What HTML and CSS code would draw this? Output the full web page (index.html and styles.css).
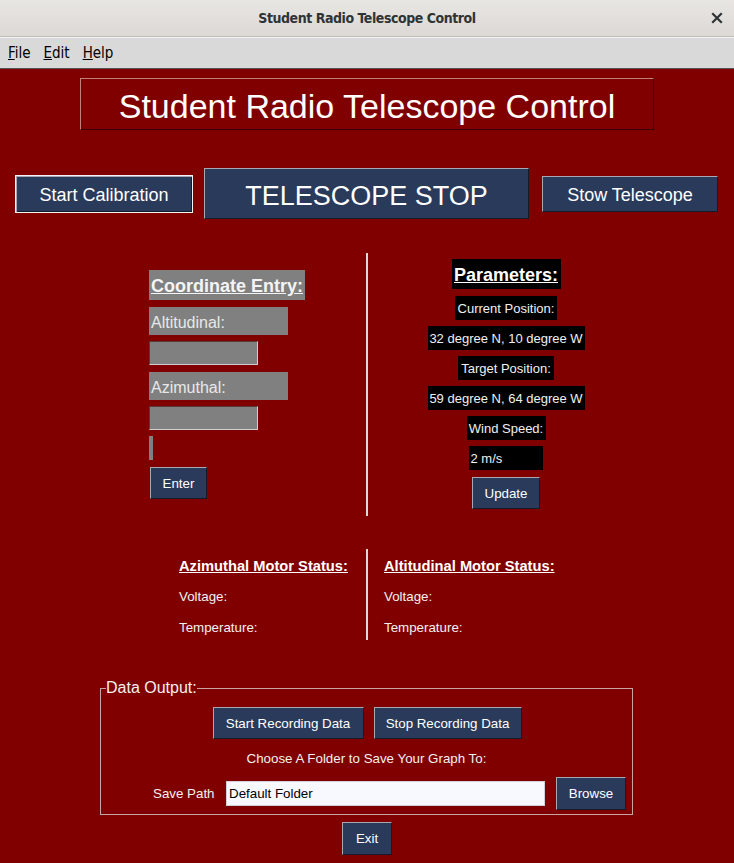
FILE: index.html
```html
<!DOCTYPE html>
<html>
<head>
<meta charset="utf-8">
<title>Student Radio Telescope Control</title>
<link rel="stylesheet" href="styles.css">
</head>
<body>
<div class="window">
  <div class="titlebar">
    <span class="title">Student Radio Telescope Control</span>
    <svg class="close" width="12" height="12" viewBox="0 0 12 12"><path d="M2 2 L10 10 M10 2 L2 10" stroke="#2e3436" stroke-width="2.2" stroke-linecap="square"/></svg>
  </div>
  <div class="menubar">
    <span class="menu"><u>F</u>ile</span>
    <span class="menu"><u>E</u>dit</span>
    <span class="menu"><u>H</u>elp</span>
  </div>
  <div class="app">
    <div class="header">Student Radio Telescope Control</div>

    <div class="toprow">
      <button class="btn btn-cal">Start Calibration</button>
      <button class="btn btn-stop">TELESCOPE STOP</button>
      <button class="btn btn-stow">Stow Telescope</button>
    </div>

    <div class="middle">
      <div class="coord">
        <div class="coord-title">Coordinate Entry:</div>
        <div class="coord-label">Altitudinal:</div>
        <div class="coord-entry"></div>
        <div class="coord-label">Azimuthal:</div>
        <div class="coord-entry"></div>
        <div class="coord-stub"></div>
        <button class="btn btn-small btn-enter">Enter</button>
      </div>
      <div class="divider"></div>
      <div class="params">
        <div class="param-title">Parameters:</div>
        <div class="param p-cur">Current Position:</div>
        <div class="param p-val">32 degree N, 10 degree W</div>
        <div class="param p-tgt">Target Position:</div>
        <div class="param p-val">59 degree N, 64 degree W</div>
        <div class="param p-wind">Wind Speed:</div>
        <div class="param p-speed">2 m/s</div>
        <button class="btn btn-small btn-update">Update</button>
      </div>
    </div>

    <div class="motors">
      <div class="motor motor-left">
        <div class="motor-title">Azimuthal Motor Status:</div>
        <div class="motor-row">Voltage:</div>
        <div class="motor-row">Temperature:</div>
      </div>
      <div class="divider divider-motor"></div>
      <div class="motor motor-right">
        <div class="motor-title">Altitudinal Motor Status:</div>
        <div class="motor-row">Voltage:</div>
        <div class="motor-row">Temperature:</div>
      </div>
    </div>

    <fieldset class="output">
      <legend>Data Output:</legend>
      <div class="rec-row">
        <button class="btn btn-small btn-rec">Start Recording Data</button>
        <button class="btn btn-small btn-rec">Stop Recording Data</button>
      </div>
      <div class="choose">Choose A Folder to Save Your Graph To:</div>
      <div class="path-row">
        <span class="path-label">Save Path</span>
        <div class="path-entry">Default Folder</div>
        <button class="btn btn-small btn-browse">Browse</button>
      </div>
    </fieldset>

    <div class="exit-row">
      <button class="btn btn-small btn-exit">Exit</button>
    </div>
  </div>
</div>
</body>
</html>
```

FILE: styles.css
```css
* { box-sizing: border-box; }
html, body { margin: 0; padding: 0; }
body {
  width: 734px;
  height: 863px;
  overflow: hidden;
  font-family: "Liberation Sans", Arial, sans-serif;
  background: #800000;
}
.window { width: 734px; height: 863px; display: flex; flex-direction: column; }

.titlebar {
  height: 37px;
  background: linear-gradient(#e8e6e3, #dcd9d5);
  border-bottom: 1px solid #c0bcb7;
  display: flex;
  align-items: center;
  justify-content: center;
  position: relative;
}
.title {
  font-family: "DejaVu Sans Condensed", "DejaVu Sans", sans-serif;
  font-weight: bold;
  font-size: 14px;
  letter-spacing: -0.45px;
  color: #2e3436;
}
.close {
  position: absolute;
  right: 11px;
  top: 12px;
}

.menubar {
  height: 32px;
  background: #d9d9d9;
  border-top: 1px solid #f4f4f4;
  border-bottom: 1px solid #555;
  display: flex;
  align-items: center;
  padding-left: 8px;
  gap: 13px;
}
.menu {
  font-family: "DejaVu Sans Condensed", "DejaVu Sans", sans-serif;
  font-size: 15px;
  color: #000;
}

.app { flex: 1; background: #800000; color: #fff; display: flex; flex-direction: column; }

.header {
  margin: 9px 0 0 80px;
  width: 574px;
  height: 52px;
  border: 1px solid;
  border-color: #c08080 #3a0000 #3a0000 #c08080;
  display: flex;
  align-items: center;
  justify-content: center;
  padding-top: 5px;
  font-size: 34px;
  color: #fff;
}

.btn {
  font-family: "Liberation Sans", Arial, sans-serif;
  background: #293a5b;
  color: #fff;
  border: 1px solid;
  border-color: #a8a8b0 #141c2c #141c2c #a8a8b0;
  padding: 0;
  white-space: nowrap;
  cursor: pointer;
}

.toprow {
  display: flex;
  align-items: center;
  margin-top: 38px;
  padding-left: 15px;
  height: 51px;
}
.btn-cal {
  width: 178px;
  height: 38px;
  font-size: 18px;
  padding-top: 3px;
  border: 1px solid #f4f4f4;
  box-shadow: inset 1px 1px #a8a8b0, inset -1px -1px #141c2c;
}
.btn-stop {
  margin-left: 11px;
  width: 325px;
  height: 51px;
  font-size: 27px;
  padding-top: 5px;
}
.btn-stow {
  margin-left: 13px;
  width: 176px;
  height: 36px;
  font-size: 18px;
  padding-top: 3px;
}

.middle {
  display: flex;
  margin-top: 34px;
  height: 263px;
}
.coord {
  width: 366px;
  padding: 17px 0 0 149px;
  display: flex;
  flex-direction: column;
  align-items: flex-start;
}
.coord-title {
  background: #808080;
  height: 30px;
  padding: 3px 2px 0;
  font-size: 18px;
  font-weight: bold;
  text-decoration: underline;
  display: flex;
  align-items: center;
  color: #f4f4f4;
}
.coord-label {
  margin-top: 7px;
  width: 139px;
  height: 28px;
  background: #808080;
  font-size: 16px;
  color: #e8e8e8;
  padding: 3px 0 0 2px;
  display: flex;
  align-items: center;
}
.coord-entry {
  margin-top: 6px;
  width: 109px;
  height: 24px;
  background: #808080;
  border: 1px solid;
  border-color: #5a3a3a #d0d0d0 #d0d0d0 #5a3a3a;
}
.coord-stub {
  margin-top: 6px;
  width: 4px;
  height: 24px;
  background: #808080;
}
.btn-small { font-size: 13.33px; }
.btn-enter {
  margin-top: 7px;
  margin-left: 1px;
  width: 57px;
  height: 32px;
}

.divider {
  width: 2px;
  background: #d8d8e0;
}

.params {
  width: 276px;
  padding-top: 6px;
  display: flex;
  flex-direction: column;
  align-items: center;
}
.param-title {
  background: #000;
  height: 30px;
  width: 109px;
  padding-top: 3px;
  font-size: 18px;
  font-weight: bold;
  text-decoration: underline;
  display: flex;
  align-items: center;
  justify-content: center;
}
.param {
  background: #000;
  height: 24px;
  margin-top: 6px;
  padding-top: 1px;
  font-size: 13px;
  white-space: nowrap;
  color: #f0f0f0;
  display: flex;
  align-items: center;
  justify-content: center;
}
.p-cur { margin-top: 7px; width: 102px; }
.p-val { width: 157px; }
.p-tgt { width: 96px; }
.p-wind { width: 79px; }
.p-speed { width: 74px; justify-content: flex-start; padding-left: 2px; margin-right: 1px; }
.btn-update {
  margin-top: 7px;
  width: 68px;
  height: 32px;
}

.motors {
  display: flex;
  margin-top: 33px;
  height: 91px;
}
.motor {
  display: flex;
  flex-direction: column;
  font-size: 13.33px;
  color: #f0f0f0;
}
.motor-left { width: 366px; padding-left: 179px; }
.motor-right { padding-left: 16px; }
.motor-title {
  margin-top: 9px;
  font-weight: bold;
  font-size: 14.7px;
  text-decoration: underline;
  color: #fff;
  height: 16px;
  line-height: 16px;
}
.motor-row {
  margin-top: 15px;
  height: 16px;
  line-height: 16px;
}

.output {
  margin: 40px 0 0 100px;
  width: 533px;
  height: 135px;
  padding: 0;
  border: 1px solid #c8a4a4;
  display: flex;
  flex-direction: column;
  align-items: center;
}
.output legend {
  padding: 0;
  margin-left: 5px;
  font-size: 16px;
  color: #f0f0f0;
  line-height: 16px;
}
.rec-row {
  display: flex;
  gap: 10px;
  margin-top: 11px;
  margin-left: 1px;
}
.btn-rec { height: 32px; padding: 0 10px; }
.btn-rec:first-child { width: 151px; }
.btn-rec:last-child { width: 148px; }
.choose {
  margin-top: 12px;
  font-size: 13.33px;
  color: #f0f0f0;
  height: 16px;
  line-height: 16px;
}
.path-row {
  display: flex;
  align-items: center;
  align-self: stretch;
  margin-top: 10px;
  padding-left: 52px;
}
.path-label {
  font-size: 13.33px;
  color: #f0f0f0;
  width: 73px;
}
.path-entry {
  width: 319px;
  height: 25px;
  background: #f8f8ff;
  border: 1px solid #d0d0d8;
  color: #000;
  font-size: 13.33px;
  display: flex;
  align-items: center;
  padding-left: 2px;
}
.btn-browse {
  margin-left: 11px;
  width: 70px;
  height: 33px;
}

.exit-row {
  display: flex;
  margin-top: 7px;
  padding-left: 342px;
}
.btn-exit {
  width: 50px;
  height: 33px;
}
```
